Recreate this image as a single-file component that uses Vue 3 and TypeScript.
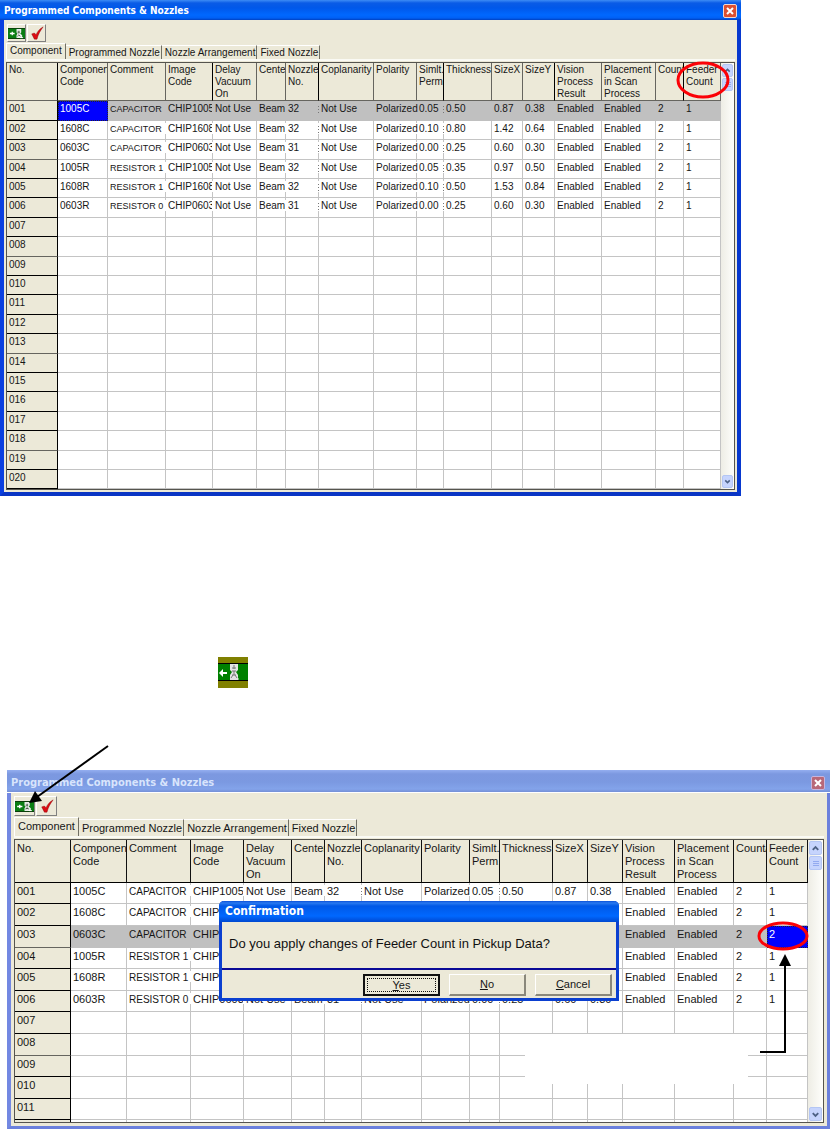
<script setup lang="ts">
interface Column {
  key: string
  label: string
  edge?: 'broken' | 'dotted'
}

interface GridWindow {
  id: string
  size: 'compact' | 'roomy'
  widths: number[]
  rows: number
  selectedRow: number
  selectedCol: number
}

const columns: Column[] = [
  { key: 'code', label: 'Component\nCode' },
  { key: 'comment', label: 'Comment', edge: 'broken' },
  { key: 'image', label: 'Image\nCode', edge: 'broken' },
  { key: 'delay', label: 'Delay\nVacuum\nOn' },
  { key: 'center', label: 'Center', edge: 'broken' },
  { key: 'nozzle', label: 'Nozzle\nNo.', edge: 'dotted' },
  { key: 'coplanarity', label: 'Coplanarity' },
  { key: 'polarity', label: 'Polarity', edge: 'broken' },
  { key: 'perm', label: 'Simlt.\nPerm.', edge: 'dotted' },
  { key: 'thickness', label: 'Thickness' },
  { key: 'sizex', label: 'SizeX' },
  { key: 'sizey', label: 'SizeY' },
  { key: 'vision', label: 'Vision\nProcess\nResult' },
  { key: 'placement', label: 'Placement\nin Scan\nProcess' },
  { key: 'count', label: 'Count/' },
  { key: 'feeder', label: 'Feeder\nCount' },
]

const parts: string[][] = [
  ['1005C', 'CAPACITOR', 'CHIP1005C', 'Not Use', 'Beam', '32', 'Not Use', 'Polarized', '0.05', '0.50', '0.87', '0.38', 'Enabled', 'Enabled', '2', '1'],
  ['1608C', 'CAPACITOR', 'CHIP1608C', 'Not Use', 'Beam', '32', 'Not Use', 'Polarized', '0.10', '0.80', '1.42', '0.64', 'Enabled', 'Enabled', '2', '1'],
  ['0603C', 'CAPACITOR', 'CHIP0603C', 'Not Use', 'Beam', '31', 'Not Use', 'Polarized', '0.00', '0.25', '0.60', '0.30', 'Enabled', 'Enabled', '2', '1'],
  ['1005R', 'RESISTOR 1', 'CHIP1005R', 'Not Use', 'Beam', '32', 'Not Use', 'Polarized', '0.05', '0.35', '0.97', '0.50', 'Enabled', 'Enabled', '2', '1'],
  ['1608R', 'RESISTOR 1', 'CHIP1608R', 'Not Use', 'Beam', '32', 'Not Use', 'Polarized', '0.10', '0.50', '1.53', '0.84', 'Enabled', 'Enabled', '2', '1'],
  ['0603R', 'RESISTOR 0', 'CHIP0603R', 'Not Use', 'Beam', '31', 'Not Use', 'Polarized', '0.00', '0.25', '0.60', '0.30', 'Enabled', 'Enabled', '2', '1'],
]

const tabs = ['Component', 'Programmed Nozzle', 'Nozzle Arrangement', 'Fixed Nozzle']

const windows: GridWindow[] = [
  {
    id: 'before',
    size: 'compact',
    widths: [51, 50, 58, 47, 44, 29, 33, 55, 43, 27, 48, 31, 32, 47, 54, 28, 37],
    rows: 20,
    selectedRow: 0,
    selectedCol: 0,
  },
  {
    id: 'after',
    size: 'roomy',
    widths: [56, 56, 64, 53, 48, 33, 37, 60, 48, 30, 53, 35, 35, 52, 59, 33, 41],
    rows: 12,
    selectedRow: 2,
    selectedCol: 15,
  },
]

const rowNo = (n: number): string => String(n).padStart(3, '0')

function cellText(win: GridWindow, row: number, col: number): string {
  if (win.id === 'after' && row === 2 && col === 15) return '2'
  return parts[row]?.[col] ?? ''
}
</script>

<template>
  <main class="page">
    <template v-for="win in windows" :key="win.id">
      <section class="window" :class="win.size">
        <header class="titlebar">
          <h2>Programmed Components &amp; Nozzles</h2>
          <button class="close" type="button" aria-label="Close">
            <svg viewBox="0 0 12 12"><path d="M3 3 L9 9 M9 3 L3 9" /></svg>
          </button>
        </header>
        <div class="client">
          <div class="toolbar">
            <button type="button" aria-label="Apply to pickup data">
              <svg viewBox="0 0 18 12" class="feed" preserveAspectRatio="none">
                <rect width="18" height="12" fill="#0a7d12" />
                <path d="M0 0.5H18M0 11.5H18" stroke="#0a3d0a" />
                <path d="M2 6H7M4.5 4V8" stroke="#fff" stroke-width="1.4" />
                <path d="M9 1H14V5L13 6L15 8V11H9V8L10 6L9 5Z" fill="#e8ece8" />
                <path d="M10 4.5H12.500M11.500 3V6M10 9L11.500 7.500L13 9" stroke="#4a5a4a" fill="none" />
                <path d="M13 10.5H16" stroke="#fff" />
              </svg>
            </button>
            <button type="button" aria-label="Confirm">
              <svg viewBox="0 0 16 16" class="tick">
                <path d="M2 9 L5 8 L7 10 C8 7 11 3 15 1 C12 5 9 10 8 15 L5 15 Z" fill="#dc0c14" stroke="#8a0a0a" stroke-width="0.5" />
              </svg>
            </button>
          </div>
          <div class="tabs" role="tablist">
            <button
              v-for="(tab, i) in tabs"
              :key="tab"
              type="button"
              role="tab"
              :aria-selected="i === 0"
              :class="{ active: i === 0 }"
            >{{ tab }}</button>
          </div>
          <div class="grid">
            <div class="rows">
              <table>
                <colgroup>
                  <col v-for="(w, i) in win.widths" :key="i" :style="{ width: w + 'px' }" />
                </colgroup>
                <thead>
                  <tr>
                    <th scope="col">No.</th>
                    <th v-for="c in columns" :key="c.key" scope="col">{{ c.label }}</th>
                  </tr>
                </thead>
                <tbody>
                  <tr v-for="r in win.rows" :key="r" :class="{ selected: r - 1 === win.selectedRow }">
                    <th scope="row">{{ rowNo(r) }}</th>
                    <td
                      v-for="(c, ci) in columns"
                      :key="c.key"
                      :class="[
                        c.key,
                        r <= parts.length ? c.edge : '',
                        { current: r - 1 === win.selectedRow && ci === win.selectedCol },
                      ]"
                    >{{ cellText(win, r - 1, ci) }}</td>
                  </tr>
                </tbody>
              </table>
            </div>
            <div class="scrollbar">
              <button type="button" aria-label="Scroll up">
                <svg viewBox="0 0 12 12"><path d="M3 7.5 L6 4.5 L9 7.5" /></svg>
              </button>
              <div class="thumb"><i></i><i></i><i></i></div>
              <button type="button" class="down" aria-label="Scroll down">
                <svg viewBox="0 0 12 12"><path d="M3 4.5 L6 7.5 L9 4.5" /></svg>
              </button>
            </div>
          </div>
        </div>

        <svg v-if="win.id === 'before'" class="ring header-ring" viewBox="0 0 54 38">
          <ellipse cx="27" cy="19" rx="25" ry="17" />
        </svg>

        <template v-else>
          <div class="blank"></div>
          <svg class="ring cell-ring" viewBox="0 0 52 30">
            <ellipse cx="26" cy="15" rx="24" ry="13" />
          </svg>
          <svg class="elbow" viewBox="0 0 34 100">
            <path d="M2 98H27V10" fill="none" stroke="#000" stroke-width="2" />
            <path d="M27 0L33 12H21Z" />
          </svg>
          <svg class="pointer" viewBox="0 0 82 60">
            <path d="M80 2L9 53" stroke="#000" stroke-width="2" />
            <path d="M1 59L7 47L14 57Z" />
          </svg>
          <div class="dialog" role="dialog" aria-labelledby="dialog-title">
            <h3 id="dialog-title">Confirmation</h3>
            <div class="dialog-body">
              <p>Do you apply changes of Feeder Count in Pickup Data?</p>
              <div class="actions">
                <button type="button" class="default"><span><u>Y</u>es</span></button>
                <button type="button"><u>N</u>o</button>
                <button type="button"><u>C</u>ancel</button>
              </div>
            </div>
          </div>
        </template>
      </section>

      <svg v-if="win.id === 'before'" class="big-icon" viewBox="0 0 30 31" role="img" aria-label="Pickup data">
        <rect width="30" height="31" fill="#808000" />
        <rect y="6" width="30" height="18" fill="#000" />
        <rect y="7" width="30" height="16" fill="#008000" />
        <path d="M1 16L5 12V15H9V17H5V20Z" fill="#fff" />
        <path d="M12 7H20V13L18 15L20 18V23H12V18L14 15L12 13Z" fill="#e4e4e4" />
        <path d="M16 8V12M14 11H18M14 14H18M14 18H18M13 21L15 18M19 21L17 18M16 14V18" stroke="#777" fill="none" />
        <path d="M12 22H21" stroke="#ddd" />
      </svg>
    </template>
  </main>
</template>

<style>
body {
  background: #fff;
}
</style>

<style scoped>
.page {
  font-family: "Liberation Sans", Arial, sans-serif;
  color: #161616;
}
button {
  font: inherit;
  color: inherit;
  margin: 0;
  padding: 0;
  box-sizing: border-box;
}
h2,
h3,
p {
  margin: 0;
}
svg {
  display: block;
}

.window {
  --font: 10px;
  --tight: 9px;
  --line: 12px;
  --head: 38px;
  --head-pad: 1px;
  --row: 19px;
  --bar: 13px;
  position: relative;
  box-sizing: border-box;
  margin-right: 89px;
  border: 4px solid #0a45e0;
  border-top: 0;
  border-left-color: #0a3fe0;
  border-right-color: #0738cf;
  border-bottom-color: #0a35c4;
  font-size: var(--font);
  line-height: var(--line);
}
.roomy {
  --font: 11px;
  --tight: 10px;
  --line: 13px;
  --head: 43px;
  --head-pad: 2px;
  --row: 22px;
  --bar: 15px;
  margin: 82px 0 0 7px;
  border: 3px solid #6b80dc;
  border-left: 4px solid #7388e2;
  border-top: 0;
}
.titlebar {
  display: flex;
  justify-content: space-between;
  align-items: center;
  height: 20px;
  margin: 0 -4px;
  padding: 1px 4px 0;
  box-sizing: border-box;
  background: linear-gradient(#3d8cf5 0, #0a5be6 3px, #0058ea 8px, #0068ff 15px, #0060f5 18px, #0040c0 20px);
}
.roomy .titlebar {
  height: 23px;
  margin-right: -3px;
  padding: 2px 5px 0 4px;
  background: linear-gradient(#94aef0 0, #7c98e0 4px, #7b99e1 12px, #83a3ea 19px, #7590d6 22px, #fff 22px);
}
.titlebar h2 {
  font: bold 10px/14px "DejaVu Sans Condensed", "DejaVu Sans", sans-serif;
  color: #fff;
}
.roomy .titlebar h2 {
  font-size: 11px;
  color: #d8e4fc;
}
.close {
  width: 14px;
  height: 14px;
  border: 1px solid #f0d8d0;
  border-radius: 2px;
  background: #dc5030;
}
.roomy .close {
  border-color: #c8b4dc;
  background: #b86878;
}
.close path {
  fill: none;
  stroke: #fff;
  stroke-width: 2;
}

.client {
  background: #ece9d8;
  padding: 4px 2px 2px;
}
.roomy .client {
  padding: 3px;
}
.toolbar {
  display: flex;
  gap: 1px;
  padding-left: 1px;
}
.roomy .toolbar {
  padding-left: 0;
}
.toolbar button {
  display: grid;
  place-items: center;
  width: 19px;
  height: 18px;
  border: 1px solid #fff;
  border-right-color: #808080;
  border-bottom-color: #808080;
  background: #ece9d8;
}
.roomy .toolbar button {
  width: 21px;
  height: 20px;
}
.feed {
  width: 100%;
  height: 11px;
}
.tick {
  width: 14px;
  height: 14px;
}

.tabs {
  display: flex;
  align-items: flex-end;
  margin-top: 1px;
  height: 16px;
  border-bottom: 2px solid #fafaf4;
}
.tabs button {
  height: 14px;
  padding: 0 1px 0 3px;
  border: 0;
  border-top: 1px solid #fff;
  border-right: 1px solid #716f64;
  background: none;
  line-height: 12px;
  white-space: nowrap;
}
.tabs .active {
  height: 16px;
  padding: 0 3px 2px;
  border-left: 1px solid #fff;
}
.roomy .tabs {
  height: 19px;
}
.roomy .tabs button {
  height: 17px;
}
.roomy .tabs .active {
  height: 19px;
}

.grid {
  display: flex;
  margin-top: 1px;
  border: 1px solid #55544e;
  background: #fff;
}
.rows {
  flex: 1;
  min-width: 0;
}
.roomy .grid {
  max-height: 282px;
  overflow: hidden;
}
table {
  width: 100%;
  table-layout: fixed;
  border-collapse: separate;
  border-spacing: 0;
}
th,
td {
  box-sizing: border-box;
  height: var(--row);
  padding: 2px 0 0 2px;
  overflow: hidden;
  border-right: 1px solid #c4c4c4;
  border-bottom: 1px solid #c4c4c4;
  text-align: left;
  vertical-align: top;
  font-weight: normal;
  white-space: nowrap;
}
thead th {
  height: var(--head);
  padding-top: var(--head-pad);
  white-space: pre;
  background: #ece9d8;
  border-right-color: #66655f;
  border-bottom-color: #66655f;
}
thead th:nth-child(3n + 1) {
  border-right-color: #000;
}
.roomy thead th {
  border-right-color: #111;
  border-bottom-color: #000;
}
tbody th {
  background: #ece9d8;
  border-right-color: #000;
  border-bottom-color: #000;
}
tbody tr:nth-child(5n + 3) th {
  border-bottom-color: #66655f;
}
.compact tbody tr:nth-child(5n + 1) > *,
.compact tbody tr:nth-child(5n + 3) > * {
  height: 20px;
}
.roomy tbody tr:nth-child(5n + 1) > *,
.roomy tbody tr:nth-child(5n + 4) > * {
  height: 21px;
}
.comment {
  font-size: var(--tight);
}
.polarity {
  overflow: visible;
}
.broken,
.dotted {
  border-right-color: transparent;
  background: linear-gradient(#c4c4c4 2px, transparent 2px 13px, #c4c4c4 13px) right / 1px 100% no-repeat border-box;
}
.dotted {
  background:
    repeating-linear-gradient(#777 0 1px, transparent 1px 3px) right 5px / 1px 7px no-repeat border-box,
    linear-gradient(#c4c4c4 2px, transparent 2px 13px, #c4c4c4 13px) right / 1px 100% no-repeat border-box;
  background-position: right 5px, right top;
  background-size: 1px 7px, 1px 100%;
}
.selected td {
  background: #c0c0c0;
  border-color: #c0c0c0;
}
.selected td.dotted {
  background: repeating-linear-gradient(#777 0 1px, transparent 1px 3px) right 5px / 1px 7px no-repeat border-box #c0c0c0;
  border-right-color: transparent;
}
.selected td.current {
  background: #00f;
  border-color: #00f;
  color: #fff;
  outline: 1px dotted #223;
  outline-offset: -1px;
}

.scrollbar {
  display: flex;
  flex-direction: column;
  width: var(--bar);
  padding: 1px;
  box-sizing: border-box;
  background: linear-gradient(90deg, #eeede5, #fefefb);
}
.scrollbar button,
.thumb {
  height: 13px;
  border: 1px solid #b4c6f4;
  border-radius: 2px;
  background: #c6d4fd;
  box-sizing: border-box;
}
.roomy .scrollbar button,
.roomy .thumb {
  height: 14px;
}
.scrollbar .down {
  margin-top: auto;
}
.scrollbar path {
  fill: none;
  stroke: #4d6185;
  stroke-width: 2;
}
.thumb {
  display: grid;
  align-content: center;
  justify-content: center;
  gap: 1px;
  margin-top: 1px;
}
.thumb i {
  width: 6px;
  height: 1px;
  background: #93aaf0;
}

.ring,
.blank,
.elbow,
.pointer,
.dialog {
  position: absolute;
}
.ring ellipse {
  fill: none;
  stroke: #fb0207;
  stroke-width: 3;
}
.header-ring {
  top: 61px;
  right: 7px;
  width: 54px;
  height: 38px;
}
.cell-ring {
  top: 151px;
  right: 18px;
  width: 52px;
  height: 30px;
}
.blank {
  top: 264px;
  right: 79px;
  width: 223px;
  height: 50px;
  background: #fff;
}
.elbow {
  top: 184px;
  right: 35px;
  width: 34px;
  height: 100px;
}
.pointer {
  top: -26px;
  left: 17px;
  width: 82px;
  height: 60px;
}
.big-icon {
  width: 30px;
  height: 31px;
  margin: 161px 0 0 218px;
}

.dialog {
  top: 131px;
  left: 208px;
  width: 400px;
  box-sizing: border-box;
  border: solid #0b3fd0;
  border-width: 0 3px 3px;
  border-radius: 5px 5px 0 0;
  background: #ece9d8;
}
.dialog h3 {
  height: 21px;
  margin: 0 -3px;
  padding: 0 6px;
  border-radius: 5px 5px 0 0;
  background: linear-gradient(#0a50d8 0, #2a7af0 2px, #0058e6 5px, #0068ff 15px, #0048d0 21px);
  color: #fff;
  font: bold 12px/21px "DejaVu Sans Condensed", "DejaVu Sans", sans-serif;
}
.dialog p {
  padding: 13px 7px 15px;
  font-size: 13px;
  line-height: 18px;
  color: #111;
}
.actions {
  display: flex;
  justify-content: flex-end;
  gap: 9px;
  padding: 4px 4px 2px;
  border-top: 2px solid #0a0a96;
}
.actions button {
  width: 77px;
  height: 22px;
  border: 1px solid #fff;
  border-right: 2px solid #8a887c;
  border-bottom: 2px solid #8a887c;
  background: #ece9d8;
  font-size: 11px;
  line-height: 15px;
}
.actions .default {
  padding: 2px;
  border: 2px solid #111;
}
.default span {
  display: block;
  border: 1px dotted #111;
  line-height: 12px;
}
</style>
